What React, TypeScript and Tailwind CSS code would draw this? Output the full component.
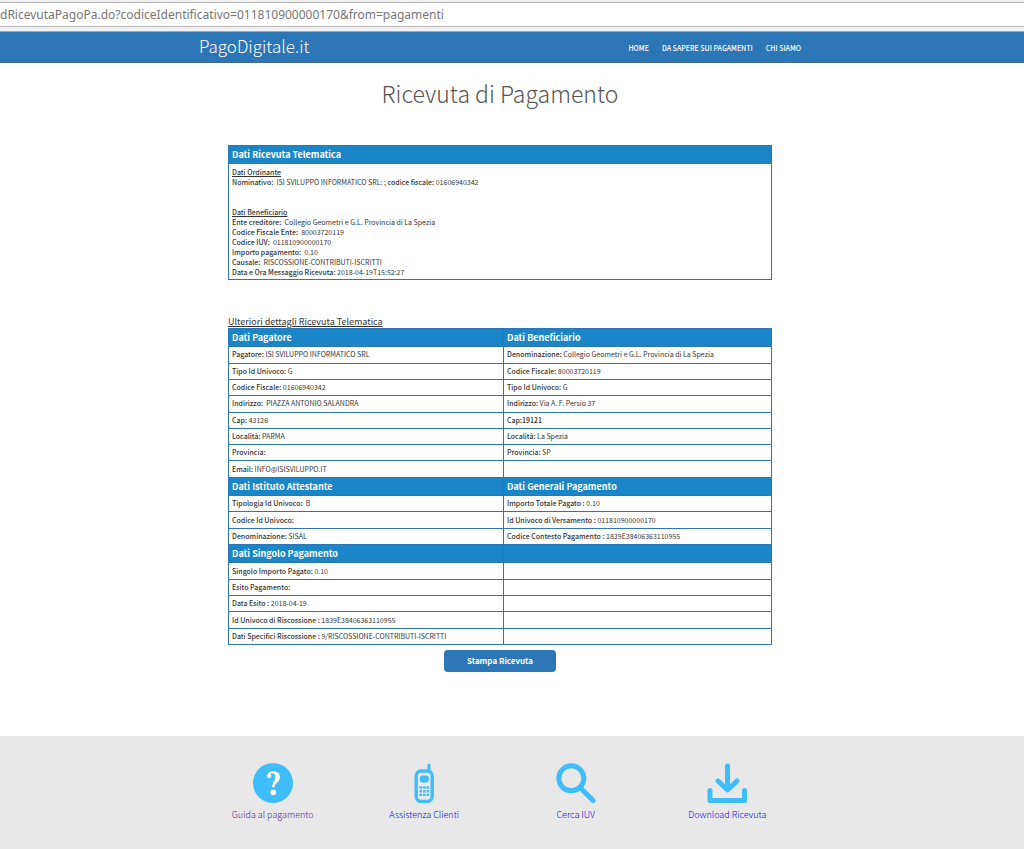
import type { ReactNode } from "react";

interface Field {
  label: string;
  value?: string;
}

interface Group {
  titles: [string, string];
  rows: [Field | null, Field | null][];
}

const groups: Group[] = [
  {
    titles: ["Dati Pagatore", "Dati Beneficiario"],
    rows: [
      [
        { label: "Pagatore:", value: "ISI SVILUPPO INFORMATICO SRL" },
        { label: "Denominazione:", value: "Collegio Geometri e G.L. Provincia di La Spezia" },
      ],
      [{ label: "Tipo Id Univoco:", value: "G" }, { label: "Codice Fiscale:", value: "80003720119" }],
      [{ label: "Codice Fiscale:", value: "01606940342" }, { label: "Tipo Id Univoco:", value: "G" }],
      [{ label: "Indirizzo:", value: "\u00a0PIAZZA ANTONIO SALANDRA" }, { label: "Indirizzo:", value: "Via A. F. Persio 37" }],
      [{ label: "Cap:", value: "43126" }, { label: "Cap:19121" }],
      [{ label: "Località:", value: "PARMA" }, { label: "Località:", value: "La Spezia" }],
      [{ label: "Provincia:" }, { label: "Provincia:", value: "SP" }],
      [{ label: "Email:", value: "INFO@ISISVILUPPO.IT" }, null],
    ],
  },
  {
    titles: ["Dati Istituto Attestante", "Dati Generali Pagamento"],
    rows: [
      [{ label: "Tipologia Id Univoco:", value: "\u00a0B" }, { label: "Importo Totale Pagato :", value: "0.10" }],
      [{ label: "Codice Id Univoco:" }, { label: "Id Univoco di Versamento :", value: "011810900000170" }],
      [{ label: "Denominazione:", value: "SISAL" }, { label: "Codice Contesto Pagamento :", value: "1839E38406363110955" }],
    ],
  },
  {
    titles: ["Dati Singolo Pagamento", ""],
    rows: [
      [{ label: "Singolo Importo Pagato:", value: "0.10" }, null],
      [{ label: "Esito Pagamento:" }, null],
      [{ label: "Data Esito :", value: "2018-04-19" }, null],
      [{ label: "Id Univoco di Riscossione :", value: "1839E38406363110955" }, null],
      [{ label: "Dati Specifici Riscossione :", value: "9/RISCOSSIONE-CONTRIBUTI-ISCRITTI" }, null],
    ],
  },
];

const beneficiario: Field[] = [
  { label: "Ente creditore:", value: "\u00a0Collegio Geometri e G.L. Provincia di La Spezia" },
  { label: "Codice Fiscale Ente:", value: "\u00a080003720119" },
  { label: "Codice IUV:", value: "\u00a0011810900000170" },
  { label: "Importo pagamento:", value: "\u00a00.10" },
  { label: "Causale:", value: "\u00a0RISCOSSIONE-CONTRIBUTI-ISCRITTI" },
  { label: "Data e Ora Messaggio Ricevuta:", value: "2018-04-19T15:52:27" },
];

function FieldText({ field }: { field: Field }) {
  return (
    <>
      <span className="font-medium">{field.label}</span>
      {field.value && <span> {field.value}</span>}
    </>
  );
}

function HelpIcon() {
  return (
    <svg viewBox="0 0 40 40" className="size-10">
      <circle cx="20" cy="20" r="20" fill="#3fbdfa" />
      <path
        d="M14.2 12.6c.6-3 2.8-4.3 5.9-4.3 4.1 0 6.9 2.2 6.9 5.7 0 5-5.3 5.4-5.3 10.2h-2.6c0-5.4 3.2-6 3.2-10.2 0-2.3-1-3.7-2.9-3.7-1 0-1.7.3-1.7 1 0 .6.5 1 .5 1.9 0 1.2-.8 2-2 2-1.4 0-2.2-1-2-2.6z"
        fill="#fff"
      />
      <circle cx="20.2" cy="29.3" r="2.9" fill="#fff" />
    </svg>
  );
}

function PhoneIcon() {
  return (
    <svg viewBox="0 0 40 40" className="size-10" fill="none" stroke="#3fbdfa">
      <rect x="12.2" y="8" width="16" height="30.5" rx="5" strokeWidth="3.4" />
      <path d="M25 7V2" strokeWidth="3" strokeLinecap="round" />
      <rect x="15.8" y="12.5" width="9" height="7" rx="3" fill="#3fbdfa" stroke="none" />
      <path d="M15.5 24.5h9.5M15.5 28.2h9.5M15.5 31.9h9.5" strokeWidth="2.4" strokeDasharray="2.5 1" />
    </svg>
  );
}

function SearchIcon() {
  return (
    <svg viewBox="0 0 40 40" className="size-10" fill="none" stroke="#3fbdfa" strokeLinecap="round">
      <circle cx="15.3" cy="15.3" r="12.5" strokeWidth="5" />
      <path d="M25 25.5L37 37.5" strokeWidth="5" />
    </svg>
  );
}

function DownloadIcon() {
  return (
    <svg viewBox="0 0 40 40" className="size-10" fill="none" stroke="#3fbdfa" strokeWidth="5" strokeLinecap="round" strokeLinejoin="round">
      <path d="M20.5 3v23M11 18l9.5 9L30 18" />
      <path d="M3 27.5v10h34.5v-10" />
    </svg>
  );
}

function FooterLink({ icon, label, visited }: { icon: ReactNode; label: string; visited?: boolean }) {
  return (
    <a
      href="#"
      className={`flex flex-col items-center gap-1 text-[9px] leading-4 font-light ${visited ? "text-[#551a8b]" : "text-[#0000ee]"}`}
    >
      {icon}
      {label}
    </a>
  );
}

export default function App() {
  return (
    <div className="flex min-h-screen flex-col bg-white font-['Noto_Sans_CJK_JP','Noto_Sans',sans-serif] text-[#333]">
      <div className="border-b border-[#aaa] bg-[#f0f0f0] pt-0.5 pb-1">
        <input
          type="text"
          aria-label="Indirizzo"
          readOnly
          value="dRicevutaPagoPa.do?codiceIdentificativo=011810900000170&from=pagamenti"
          className="block h-[25px] w-full border-y border-[#b4b4b4] bg-white font-['Noto_Sans',sans-serif] text-[12px] text-[#757575] outline-none"
        />
      </div>

      <header className="border-b border-[#41699a] bg-[#2c75b6] pr-6 text-white">
        <div className="mx-auto flex max-w-[606px] items-center justify-between px-0.5 pt-0.5 pb-1">
          <a href="#" className="text-[17px] leading-6 font-light">
            PagoDigitale.it
          </a>
          <nav className="flex gap-[13px] pt-1 text-[7px] leading-4 font-medium">
            <a href="#">HOME</a>
            <a href="#">DA SAPERE SUI PAGAMENTI</a>
            <a href="#">CHI SIAMO</a>
          </nav>
        </div>
      </header>

      <main className="grow pt-[14px] pr-6 pb-16">
        <div className="mx-auto max-w-[544px]">
          <h1 className="text-center text-[23px] leading-8 font-light text-[#555]">Ricevuta di Pagamento</h1>

          <section className="mt-9 border border-[#2c75b6]">
            <h2 className="bg-[#1a86c8] px-[3px] text-[9px] leading-[18px] font-bold text-white">Dati Ricevuta Telematica</h2>
            <div className="px-[3px] pt-[3px] pb-0.5 text-[7px] leading-[10px]">
              <h3 className="font-medium underline">Dati Ordinante</h3>
              <p>
                <span className="font-medium">Nominativo:</span> &nbsp;ISI SVILUPPO INFORMATICO SRL: ;{" "}
                <span className="font-medium">codice fiscale:</span> 01606940342
              </p>
              <h3 className="mt-5 font-medium underline">Dati Beneficiario</h3>
              {beneficiario.map((field) => (
                <p key={field.label}>
                  <FieldText field={field} />
                </p>
              ))}
            </div>
          </section>

          <h2 className="mt-9 text-[9px] leading-3 underline">Ulteriori dettagli Ricevuta Telematica</h2>
          <table className="h-[317px] w-full table-fixed border-collapse text-left">
            <colgroup>
              <col className="w-[275px]" />
              <col />
            </colgroup>
            {groups.map((group) => (
              <tbody key={group.titles[0]}>
                <tr>
                  {group.titles.map((title) => (
                    <th key={title} className="border border-[#2c75b6] bg-[#1a86c8] px-[3px] text-[9px] leading-[17px] font-bold text-white">
                      {title}
                    </th>
                  ))}
                </tr>
                {group.rows.map((row, i) => (
                  <tr key={i}>
                    {row.map((field, j) => (
                      <td key={j} className="border border-[#2c75b6] px-[3px] text-[7px] leading-[15px]">
                        {field && <FieldText field={field} />}
                      </td>
                    ))}
                  </tr>
                ))}
              </tbody>
            ))}
          </table>
          <button
            type="button"
            className="mx-auto mt-[5px] block rounded-sm bg-[#2c75b6] px-[23px] text-[8px] leading-[22px] font-bold text-white"
          >
            Stampa Ricevuta
          </button>
        </div>
      </main>

      <footer className="bg-[#e8e8e8] pt-[27px] pr-6 pb-[26px]">
        <div className="mx-auto grid max-w-[606px] grid-cols-4">
          <FooterLink icon={<HelpIcon />} label="Guida al pagamento" visited />
          <FooterLink icon={<PhoneIcon />} label="Assistenza Clienti" />
          <FooterLink icon={<SearchIcon />} label="Cerca IUV" />
          <FooterLink icon={<DownloadIcon />} label="Download Ricevuta" />
        </div>
      </footer>
    </div>
  );
}
